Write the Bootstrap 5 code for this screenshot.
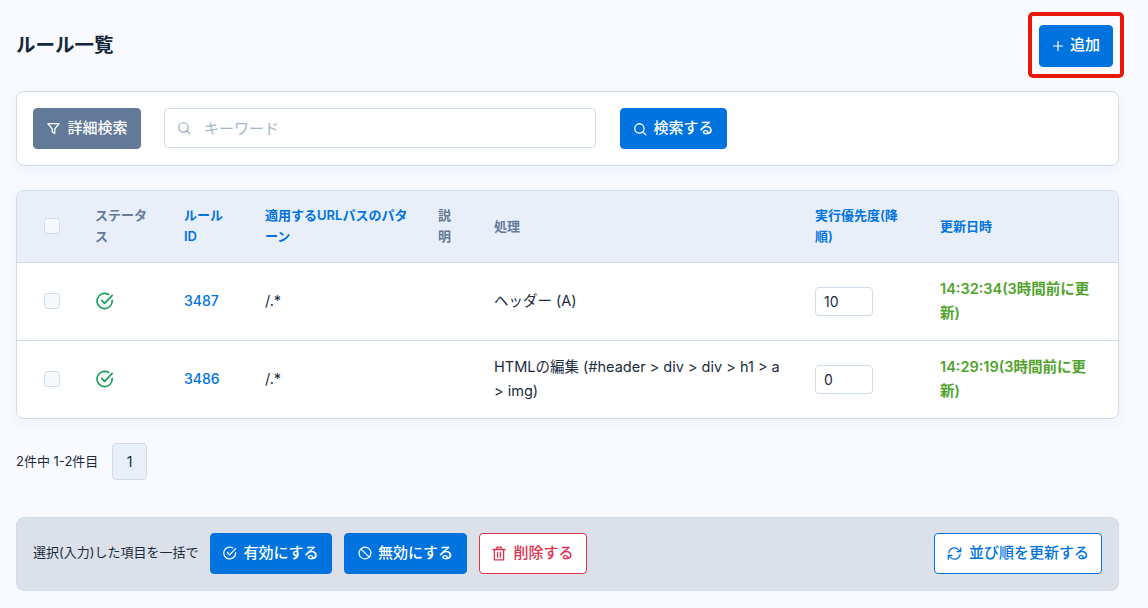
<!DOCTYPE html>
<html lang="ja">

<head>
    <meta charset="UTF-8">
    <meta name="viewport" content="width=device-width, initial-scale=1.0">
    <title>ルール一覧</title>
    <link href="https://cdn.jsdelivr.net/npm/bootstrap@5.3.0/dist/css/bootstrap.min.css" rel="stylesheet">
    <style>
        body {
            background: #f9faff;
            color: #1a2b3c;
            font-family: Inter, "Noto Sans CJK JP", sans-serif;
            font-size: 14px;
        }

        .page-wrap { padding: 0 29px 0 16px; position: relative; height: 608px; overflow: hidden; }
        .top-row { height: 91px; }
        .page-title { font-size: 19.5px; font-weight: 700; color: #14273a; margin: 0; }

        .btn-main {
            background: #0073de; border: 1px solid #0073de; color: #fff;
            font-size: 15px; font-weight: 500; height: 41px; border-radius: 4px;
            padding: 0; display: inline-flex; align-items: center; gap: 6px;
        }
        .btn-main:hover { background: #0067c8; color: #fff; }
        .btn-add { width: 74px; height: 42px; justify-content: center; margin-right: 6px; }
        .btn-filter { background: #627a97; border-color: #627a97; width: 108px; justify-content: center; }
        .btn-filter:hover { background: #627a97; }
        .btn-search { width: 107px; justify-content: center; }

        .add-mark {
            position: absolute; left: 1028px; top: 12px; width: 96px; height: 66px;
            border: 4px solid #e8190c; border-radius: 5px; pointer-events: none;
        }

        .panel-box {
            border: 1px solid #cfdcea; border-radius: 8px; background: #fff;
            box-shadow: 0 4px 14px rgba(60, 80, 120, .05);
        }
        .search-panel { height: 75px; padding: 0 16px; gap: 23px; }
        .search-field { position: relative; width: 432px; margin: 0 1px 1px 0; }
        .search-field svg { position: absolute; left: 13px; top: 13px; }
        .search-field .form-control {
            height: 40px; padding-left: 39px; font-size: 15px; border-color: #cfdcea; border-radius: 4px;
        }
        .search-field .form-control::placeholder { color: #a3b6cc; }

        .table-panel { margin-top: 24px; overflow: hidden; }
        .rule-table { margin: 0; table-layout: fixed; width: 100%; }
        .rule-table th, .rule-table td {
            vertical-align: middle; padding: 0 12px; border-bottom: 1px solid #cfdcea;
            color: #1a2b3c; background: transparent; line-height: 24px; font-size: 14.5px;
        }
        .rule-table tr:last-child td { border-bottom: 0; }
        .rule-table thead th {
            background: #e8eff8; font-size: 13px; font-weight: 600; height: 71px;
            line-height: 21px; color: #627a97;
        }
        .rule-table thead th.sort-col { color: #0073de; }
        .rule-table tbody td { height: 78px; }
        .rule-table th:first-child, .rule-table td:first-child { padding-left: 27px; padding-right: 0; }
        .rule-table .form-check-input {
            width: 16px; height: 16px; margin: 0; background-color: #f5f8fd; border-color: #cfdcea; display: block;
        }
        .status-icon { display: block; margin-left: 1px; }
        .id-link { color: #0073de; text-decoration: none; font-weight: 500; font-size: 14px; }
        .prio-input {
            width: 58px; height: 29px; padding: 0 8px; font-size: 14px;
            border-color: #cfdcea; border-radius: 4px; color: #1a2b3c;
        }
        .rule-table td.update-text { color: #4fa32b; font-weight: 600; }

        .pager-row { margin-top: 24px; gap: 12px; height: 37px; }
        .pager-count { font-size: 13px; width: 84px; }
        .pager-num {
            width: 35px; height: 37px; border: 1px solid #cfdcea; border-radius: 4px;
            background: #e8eff8; color: #1a2b3c; padding: 0; font-size: 14px;
        }

        .bulk-bar {
            margin-top: 37px; height: 74px; padding: 0 16px 2px; gap: 12px;
            background: #dce1e9; border: 1px solid #cfdcea; border-radius: 8px;
        }
        .bulk-label { font-size: 13px; width: 165px; white-space: nowrap; }
        .btn-bulk-on { width: 122px; justify-content: center; }
        .btn-bulk-off { width: 123px; justify-content: center; }
        .btn-del {
            background: #fff; border: 1px solid #e2304f; color: #e2304f; width: 108px;
            font-size: 15px; font-weight: 500; height: 41px; border-radius: 4px;
            display: inline-flex; align-items: center; justify-content: center; gap: 7px; padding: 0;
        }
        .btn-sort {
            background: #fff; border: 1px solid #0073de; color: #0073de; width: 168px;
            font-size: 15px; font-weight: 500; height: 41px; border-radius: 4px;
            display: inline-flex; align-items: center; justify-content: center; gap: 7px; padding: 0;
        }
    </style>
</head>

<body>
    <div class="page-wrap">
        <div class="top-row d-flex justify-content-between align-items-center">
            <h1 class="page-title">ルール一覧</h1>
            <button class="btn btn-main btn-add" type="button">
                <svg width="12" height="12" viewBox="0 0 12 12" fill="none" stroke="currentColor" stroke-width="1.2"><path d="M6 1v10M1 6h10" /></svg>
                追加
            </button>
        </div>
        <div class="add-mark"></div>

        <div class="panel-box search-panel d-flex align-items-center">
            <button class="btn btn-main btn-filter" type="button">
                <svg width="15" height="15" viewBox="0 0 24 24" fill="none" stroke="currentColor" stroke-width="2" stroke-linejoin="round"><path d="M3 4h18l-7 8.5V20l-4-2.5v-5z" /></svg>
                詳細検索
            </button>
            <div class="search-field">
                <svg width="14" height="14" viewBox="0 0 24 24" fill="none" stroke="#8fa5bd" stroke-width="2" stroke-linecap="round"><circle cx="11" cy="11" r="8" /><path d="M17 17l5 5" /></svg>
                <input class="form-control" type="text" placeholder="キーワード">
            </div>
            <button class="btn btn-main btn-search" type="button">
                <svg width="14" height="14" viewBox="0 0 24 24" fill="none" stroke="currentColor" stroke-width="2.2" stroke-linecap="round"><circle cx="11" cy="11" r="8" /><path d="M17 17l5 5" /></svg>
                検索する
            </button>
        </div>

        <div class="panel-box table-panel">
            <table class="table rule-table">
                <colgroup>
                    <col style="width: 66px">
                    <col style="width: 89px">
                    <col style="width: 81px">
                    <col style="width: 173px">
                    <col style="width: 56px">
                    <col style="width: 321px">
                    <col style="width: 125px">
                    <col>
                </colgroup>
                <thead>
                    <tr>
                        <th><input class="form-check-input" type="checkbox"></th>
                        <th>ステータ<br>ス</th>
                        <th class="sort-col">ルール<br>ID</th>
                        <th class="sort-col">適用するURLパスのパタ<br>ーン</th>
                        <th>説<br>明</th>
                        <th>処理</th>
                        <th class="sort-col">実行優先度(降<br>順)</th>
                        <th class="sort-col">更新日時</th>
                    </tr>
                </thead>
                <tbody>
                    <tr>
                        <td><input class="form-check-input" type="checkbox"></td>
                        <td>
                            <svg class="status-icon" width="18" height="18" viewBox="0 0 18 18" fill="none" stroke="#0f9d58" stroke-width="1.6" stroke-linecap="round" stroke-linejoin="round"><path d="M16.2 8.4A7.6 7.6 0 1 1 12.6 2.5" /><path d="M5.6 8.4l3 3 7.6-8" /></svg>
                        </td>
                        <td><a class="id-link" href="#">3487</a></td>
                        <td>/.*</td>
                        <td></td>
                        <td>ヘッダー (A)</td>
                        <td><input class="form-control prio-input" type="text" value="10"></td>
                        <td class="update-text">14:32:34(3時間前に更<br>新)</td>
                    </tr>
                    <tr>
                        <td><input class="form-check-input" type="checkbox"></td>
                        <td>
                            <svg class="status-icon" width="18" height="18" viewBox="0 0 18 18" fill="none" stroke="#0f9d58" stroke-width="1.6" stroke-linecap="round" stroke-linejoin="round"><path d="M16.2 8.4A7.6 7.6 0 1 1 12.6 2.5" /><path d="M5.6 8.4l3 3 7.6-8" /></svg>
                        </td>
                        <td><a class="id-link" href="#">3486</a></td>
                        <td>/.*</td>
                        <td></td>
                        <td>HTMLの編集 (#header &gt; div &gt; div &gt; h1 &gt; a<br>&gt; img)</td>
                        <td><input class="form-control prio-input" type="text" value="0"></td>
                        <td class="update-text">14:29:19(3時間前に更<br>新)</td>
                    </tr>
                </tbody>
            </table>
        </div>

        <div class="pager-row d-flex align-items-center">
            <span class="pager-count">2件中 1-2件目</span>
            <button class="btn pager-num" type="button">1</button>
        </div>

        <div class="bulk-bar d-flex align-items-center">
            <span class="bulk-label">選択(入力)した項目を一括で</span>
            <button class="btn btn-main btn-bulk-on" type="button">
                <svg width="14" height="14" viewBox="0 0 18 18" fill="none" stroke="currentColor" stroke-width="1.6" stroke-linecap="round" stroke-linejoin="round"><path d="M16.2 8.4A7.6 7.6 0 1 1 12.6 2.5" /><path d="M5.6 8.4l3 3 7.6-8" /></svg>
                有効にする
            </button>
            <button class="btn btn-main btn-bulk-off" type="button">
                <svg width="14" height="14" viewBox="0 0 18 18" fill="none" stroke="currentColor" stroke-width="1.6"><circle cx="9" cy="9" r="7.6" /><path d="M3.7 3.7l10.6 10.6" /></svg>
                無効にする
            </button>
            <button class="btn btn-del" type="button">
                <svg width="14" height="15" viewBox="0 0 14 15" fill="none" stroke="currentColor" stroke-width="1.3" stroke-linecap="round" stroke-linejoin="round"><path d="M1 3.5h12M4.8 3.5V1.2h4.4v2.3M2.4 3.5v10.3h9.2V3.5M5.6 6.2v5M8.4 6.2v5" /></svg>
                削除する
            </button>
            <button class="btn btn-sort ms-auto" type="button">
                <svg width="15" height="15" viewBox="0 0 24 24" fill="none" stroke="currentColor" stroke-width="2" stroke-linecap="round" stroke-linejoin="round"><path d="M3 11a9 9 0 0 1 15.5-5.2L22 9M22 3v6h-6M21 13a9 9 0 0 1-15.5 5.2L2 15M2 21v-6h6" /></svg>
                並び順を更新する
            </button>
        </div>
    </div>

    <script src="https://cdn.jsdelivr.net/npm/bootstrap@5.3.0/dist/js/bootstrap.bundle.min.js"></script>
</body>

</html>
